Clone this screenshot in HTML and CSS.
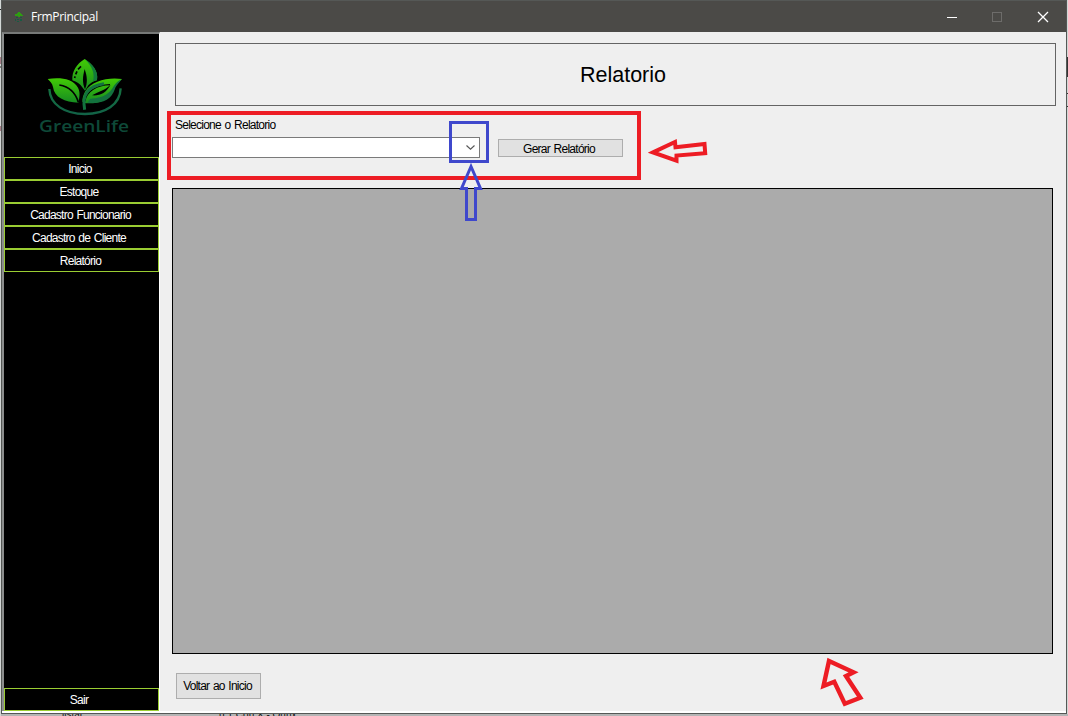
FILE: index.html
```html
<!DOCTYPE html>
<html lang="pt-BR">
<head>
<meta charset="utf-8">
<title>FrmPrincipal</title>
<link rel="stylesheet" href="styles.css">
</head>
<body>
<div class="desktop">
  <div class="window">
    <header class="titlebar">
      <svg class="app-icon" width="10" height="12" viewBox="0 0 10 12" shape-rendering="crispEdges"><path d="M4 1h2v1h1v1h1v1h1v1H6v1H4V5H1V3h2V2h1z" fill="#2f9d12"/><path d="M2 6h2v1H2zM6 6h2v1H6zM1 8h1v2H1zM3 8h2v1H3zM6 8h2v2H6zM3 10h2v1H3z" fill="#175c43"/></svg>
      <span class="caption">FrmPrincipal</span>
      <svg class="controls" width="120" height="30" viewBox="0 0 120 30" fill="none" shape-rendering="crispEdges">
        <path d="M7 15.5h10" stroke="#fff"/>
        <rect x="52.5" y="10.5" width="9" height="9" stroke="#6d6c6a"/>
        <path d="M98 10l10 10M108 10l-10 10" stroke="#fff" stroke-width="1.3" shape-rendering="auto"/>
      </svg>
    </header>
    <div class="client">
      <aside class="sidebar">
        <div class="brand">
          <svg width="110" height="90" viewBox="0 0 330 270">
            <defs>
              <linearGradient id="leaf" x1="0" y1="0" x2="0" y2="1"><stop offset="0" stop-color="#42cb05"/><stop offset="1" stop-color="#168b22"/></linearGradient>
              <linearGradient id="arc" x1="0" y1="0" x2="0" y2="1"><stop offset="0" stop-color="#157040"/><stop offset="1" stop-color="#126347"/></linearGradient>
            </defs>
            <path d="M164 27C140 42 126 62 127 91c13 4 23 11 31 22l7 9 10-16c8-8 16-12 26-15 5-29-15-49-37-64z" fill="url(#leaf)"/>
            <path d="M164 27c23 22 31 44 25 67l12-4c5-28-13-47-37-63z" fill="#137c3c"/>
            <path d="M164 57c-6 23-8 40 1 61 8-20 7-37-1-61z" fill="#000"/>
            <path d="M153 49l-9 9M141 64l-4 9M135 79l-1 5" stroke="#000" stroke-width="5" fill="none"/>
            <path d="M53 87c34-5 75-3 91 26 7 13 5 28 1 45-41-2-72-15-76-47-2-11-9-17-16-24z" fill="url(#leaf)"/>
            <path d="M88 105c29 5 48 20 57 52" stroke="#000" stroke-width="5" fill="none"/>
            <path d="M276 87c-42-6-91 5-111 38-6 11-8 20-8 30l11 5c51 1 73-13 83-43 3-8 14-18 25-30z" fill="url(#leaf)"/>
            <path d="M276 87c-22 10-24 24-35 36-17 18-38 21-61 24l-8 12c49 2 72-11 83-43 2-7 12-18 21-29z" fill="#13723e"/>
            <path d="M242 104c-20 19-34 19-56 32 25 2 42-8 56-32z" fill="#000"/>
            <path d="M240 104c-40 1-70 19-76 50" fill="none" stroke="#000" stroke-width="4"/>
            <path d="M222 101c-46 7-67 30-58 78" fill="none" stroke="#13723e" stroke-width="9"/>
            <path d="M58 117c2 47 46 75 107 75s105-28 107-77" fill="none" stroke="url(#arc)" stroke-width="7"/>
            <text x="27" y="246" class="logo-text" textLength="270" lengthAdjust="spacingAndGlyphs">GreenLife</text>
          </svg>
        </div>
        <nav class="menu">
          <button class="item nudge-right">Inicio</button>
          <button class="item nudge-left">Estoque</button>
          <button class="item">Cadastro Funcionario</button>
          <button class="item nudge-left">Cadastro de Cliente</button>
          <button class="item">Relatório</button>
        </nav>
        <button class="item exit nudge-left">Sair</button>
      </aside>
      <main class="content">
        <h1 class="heading">Relatorio</h1>
        <label class="field-label">Selecione o Relatorio</label>
        <div class="filters">
          <div class="combo"><svg width="9" height="5" viewBox="0 0 9 5"><path d="M.5.5l4 3.7 4-3.7" fill="none" stroke="#555" stroke-width="1.1"/></svg></div>
          <button class="btn generate">Gerar Relatório</button>
        </div>
        <div class="grid"></div>
        <button class="btn back">Voltar ao Inicio</button>
      </main>
    </div>
  </div>
  <div class="behind"><span class="fragment one">listar</span><span class="fragment two">(LT Con X - Ounx</span></div>
  <svg class="annotations" width="1068" height="716" viewBox="0 0 1068 716" fill="none">
    <path d="M.5 9v1M0 67h1" stroke="#222"/>
    <path d="M.5 57v7M.5 126v5" stroke="#a77e87"/>
    <path d="M1067.5 57v20M1067.5 93v1M1067.5 106v1" stroke="#333"/>
    <g stroke="#ed1c24">
      <rect x="169" y="113" width="470" height="65" stroke-width="4"/>
      <path d="M653 152.4l22-10.4.5 5.3L704.5 144l.7 9.2-28.7 2.3v5.2z" stroke-width="4"/>
      <path d="M829 661l24.5 11.3-7.5 3.7 14.3 21.7-15.5 6-10.5-22-10.8 4.3z" stroke-width="4.4"/>
    </g>
    <g stroke="#3f48cc" stroke-width="3">
      <rect x="450.5" y="122.5" width="37" height="39"/>
      <path d="M471 166.5l-9.5 22h5v31h9v-31h5z"/>
    </g>
  </svg>
</div>
</body>
</html>
```
FILE: styles.css
```css
* { box-sizing: border-box; }
body { margin: 0; overflow: hidden; font-family: "Liberation Sans", Arial, sans-serif; font-size: 12px; }
button { font: inherit; margin: 0; padding: 0; white-space: nowrap; }
.desktop { position: relative; width: 1068px; height: 716px; background: #d3d7d5; display: flex; flex-direction: column; padding: 0 0 0 1px; overflow: hidden; }
.window { width: 1066px; height: 714px; border: 1px solid #555856; background: #efefef; display: flex; flex-direction: column; flex: none; }
.titlebar { height: 31px; flex: none; background: #4b4a47; display: flex; align-items: center; padding: 0 6px 0 12px; }
.caption { margin-left: 7px; color: #fff; font-family: "Open Sans", "Noto Sans", sans-serif; font-size: 12px; letter-spacing: -.3px; }
.controls { margin-left: auto; }
.client { flex: 1; display: flex; min-height: 0; border-bottom: 2px solid #fff; }
.sidebar { width: 158px; background: #000; border-left: 2px solid #8b8d8d; border-top: 2px solid #777978; border-right: 1px solid #fff; display: flex; flex-direction: column; }
.brand { height: 123px; flex: none; padding: 16px 0 0 26px; }
.brand svg { display: block; }
.logo-text { font-family: "Open Sans", "Noto Sans", sans-serif; font-size: 47px; font-weight: 600; fill: #0e4938; }
.menu { display: flex; flex-direction: column; }
.item { height: 23px; width: 155px; flex: none; background: #000; border: 1px solid #9acd32; border-radius: 0; color: #fff; letter-spacing: -.75px; word-spacing: 1px; line-height: 21px; padding: 1px 2px 0 0; }
.nudge-left { padding-right: 5px; }
.nudge-right { padding-right: 3px; }
.exit { margin-top: auto; }
.content { flex: 1; display: flex; flex-direction: column; align-items: flex-start; padding: 11px 11px 0 12px; }
.heading { margin: 0 0 0 3px; width: 881px; height: 63px; border: 1px solid #646464; font-size: 21.5px; font-weight: 400; text-align: center; line-height: 62px; padding-left: 15px; flex: none; }
.field-label { margin: 12px 0 0 3px; height: 19px; line-height: 14px; letter-spacing: -.75px; word-spacing: 1px; flex: none; }
.filters { display: flex; align-items: center; height: 21px; gap: 18px; flex: none; }
.combo { width: 308px; height: 21px; border: 1px solid #7a7a7a; background: #fff; display: flex; align-items: center; justify-content: flex-end; padding-right: 4px; }
.btn { background: #e1e1e1; border: 1px solid #adadad; border-radius: 0; color: #000; letter-spacing: -.75px; word-spacing: 1px; }
.generate { width: 125px; height: 18px; line-height: 17px; padding-right: 3px; padding-top: 1px; }
.grid { margin-top: 30px; width: 881px; height: 466px; background: #ababab; border: 1px solid #000; flex: none; }
.back { margin: 19px 0 0 4px; width: 85px; height: 26px; padding-right: 2px; flex: none; }
.behind { height: 2px; background: #b5b5b5; display: flex; overflow: hidden; font-size: 10px; line-height: 2px; flex: none; }
.fragment { color: #111; white-space: nowrap; }
.one { margin-left: 61px; width: 157px; }
.annotations { position: absolute; left: 0; top: 0; }
```
